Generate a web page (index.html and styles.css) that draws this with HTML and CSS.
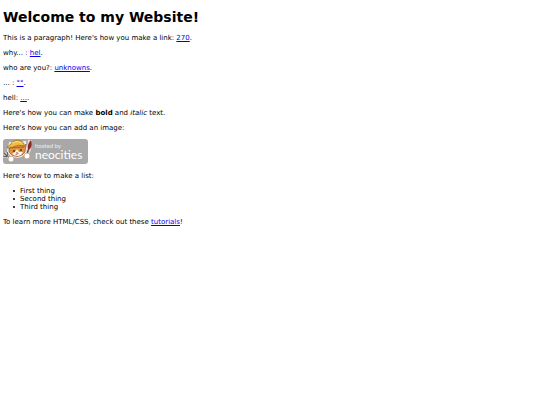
FILE: index.html
```html
<!DOCTYPE html>
<html lang="en">
<head>
    <meta charset="UTF-8">
    <meta name="viewport" content="width=device-width, initial-scale=1.0">
    <title>My Website</title>
    <link rel="stylesheet" href="styles.css">
</head>
<body>
<h1>Welcome to my Website!</h1>

<p>This is a paragraph! Here's how you make a link: <a href="270.html">270</a>.</p>
<p>why... : <a href="hel.html">hel</a>.</p>
<p>who are you?: <a href="unknowns.html">unknowns</a>.</p>
<p>... : <a href="stars.html">°°</a>.</p>
<p>hell: <a href="dots.html">...</a>.</p>

<p>Here's how you can make <strong>bold</strong> and <em>italic</em> text.</p>

<p>Here's how you can add an image:</p>
<svg class="site-button" viewBox="0 0 85 25" role="img" aria-label="hosted by neocities">
    <rect width="85" height="25" rx="3" fill="#a8a8a8"/>
    <!-- fork -->
    <path d="M1 14l3 3M4 12l1 4M0 17l4 1M4 16l4 6" stroke="#ddd" stroke-width="2.5" fill="none"/>
    <path d="M1 14l3 3M4 12l1 4M0 17l4 1M4 16l4 6" stroke="#5b5654" stroke-width="1.2" fill="none"/>
    <!-- brush -->
    <path d="M27 1l-1 9-3 8" stroke="#e5e0dc" stroke-width="4" fill="none"/>
    <path d="M26 9l-3 9" stroke="#67463d" stroke-width="1.6" fill="none"/>
    <path d="M28 1q2 5-1 9h-2q-1-5 3-9z" fill="#8c2a2a"/>
    <!-- cat -->
    <path d="M6 8L7 4l3 1 8-1 4-1 1 7-1 4-4 3q-6 2-10-1l-3-4z" fill="#e08b3c" stroke="#f6ece2" stroke-width="2"/>
    <path d="M6 9l0 4 3 3q5 3 10 0l3-3 1-8-2 3z" fill="#e3913f" stroke="#7d4c2c" stroke-width=".6"/>
    <path d="M9 15l3-2 2-3 2 3 4 0-2 3-3 1q-4 0-6-2z" fill="#fff4e5"/>
    <path d="M4 8l3-2q2-4 7-5 5 0 7 4l0 2q-6-2-11 1l-5 1z" fill="#f0bd3c" stroke="#93672a" stroke-width=".7"/>
    <path d="M9 4q5-3 10 0" stroke="#ffe07c" fill="none"/>
    <circle cx="11" cy="12" r="1" fill="#49352a"/>
    <circle cx="18" cy="11" r="1" fill="#49352a"/>
    <path d="M13 13h2l-1 1zm-1 2q2 2 4-1" fill="#9f493b"/>
    <!-- paws -->
    <circle cx="8" cy="20" r="3" fill="#fff" stroke="#c39d7b" stroke-width=".8"/>
    <circle cx="24" cy="17" r="3" fill="#fff" stroke="#c39d7b" stroke-width=".8"/>
    <text class="hosted" x="32" y="9">hosted by</text>
    <text class="brand" x="32" y="20">neocities</text>
</svg>

<p>Here's how to make a list:</p>
<ul>
    <li>First thing</li>
    <li>Second thing</li>
    <li>Third thing</li>
</ul>

<p>To learn more HTML/CSS, check out these <a href="tutorials.html">tutorials</a>!</p>
</body>
</html>
```
FILE: styles.css
```css
body {
    margin: 0 3px;
    background-color: white;
    color: black;
    font-family: Verdana, "DejaVu Sans", sans-serif;
    font-size: 7px;
    line-height: 8px;
}

h1 {
    margin: 9px 0;
    font-size: 14px;
    line-height: 16px;
}

p {
    margin: 7px 0;
}

a {
    color: #0000ee;
}

.site-button {
    display: block;
    width: 85px;
    height: 25px;
    margin: 6px 0 8px;
    font-family: Lato, sans-serif;
}

.hosted {
    fill: #eeeeee;
    font-size: 6px;
}

.brand {
    fill: white;
    font-size: 12px;
}

ul {
    margin: 7px 0;
    padding-left: 10px;
    list-style: none;
}

li {
    display: flex;
    align-items: center;
}

li::before {
    content: "";
    width: 2px;
    height: 2px;
    margin-right: 5px;
    border-radius: 50%;
    background-color: black;
}
```
